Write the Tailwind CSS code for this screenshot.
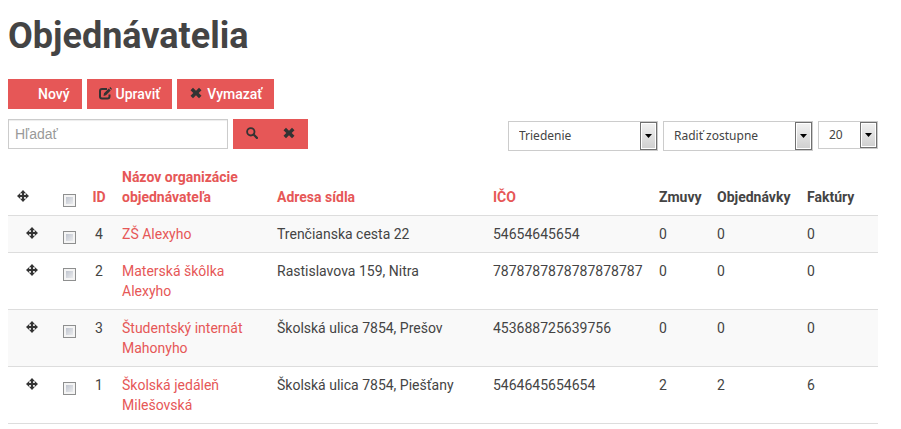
<!DOCTYPE html>
<html lang="sk">
<head>
    <meta charset="UTF-8">
    <meta name="viewport" content="width=device-width, initial-scale=1.0">
    <title>Objednávatelia</title>
    <script src="https://cdn.jsdelivr.net/npm/@tailwindcss/browser@4"></script>
</head>
<body class="bg-white pl-2 pr-[23px] font-[Roboto,sans-serif] text-sm leading-5 text-[#444]">
    <!-- icon shapes -->
    <svg class="hidden">
      <symbol id="icon-move" viewBox="0 0 12 12">
        <path d="M6 0 9 3.200H7.100v1.700h1.700V3L12 6 8.800 9V7.100H7.100v1.700H9L6 12 3 8.800h1.900V7.100H3.200V9L0 6l3.200-3v1.900h1.700V3.200H3z"/>
      </symbol>
      <symbol id="icon-x" viewBox="0 0 12 12">
        <path d="M3 .7 6 3.700 9 .7 11.500 3.200 8.700 6l2.800 2.800L9 11.300l-3-3-3 3L.5 8.800 3.300 6 .5 3.200z"/>
      </symbol>
      <symbol id="icon-search" viewBox="0 0 13 13">
        <circle cx="5.200" cy="5.200" r="4" fill="none" stroke="currentColor" stroke-width="2"/>
        <path d="m8.200 8.200 3.600 3.600" stroke="currentColor" stroke-width="2.400" stroke-linecap="round"/>
      </symbol>
      <symbol id="icon-edit" viewBox="0 0 13 13">
        <path d="M8 2H3a2 2 0 0 0-2 2v5.500a2 2 0 0 0 2 2h5.500a2 2 0 0 0 2-2V7.500" fill="none" stroke="currentColor" stroke-width="2"/>
        <path d="m4.500 9 .5-2.800L9.800 1.500l1.900 1.900L7 8.300zM10.400 .9l.8-.8 1.800 1.800-.8.8z"/>
      </symbol>
    </svg>

    <h1 class="pt-4 text-4xl leading-10 font-bold">Objednávatelia</h1>

    <div class="mt-[23px] flex gap-[5px] font-medium text-white">
      <button type="button" class="h-[30px] bg-[#e65757] pr-3 pl-[30px]">Nový</button>
      <button type="button" class="flex h-[30px] items-center gap-1 bg-[#e65757] px-3"><svg class="mb-0.5 size-[13px] fill-current text-[#333]"><use href="#icon-edit"/></svg>Upraviť</button>
      <button type="button" class="flex h-[30px] items-center gap-1 bg-[#e65757] px-3"><svg class="mx-px mb-0.5 size-3 fill-current text-[#333]"><use href="#icon-x"/></svg>Vymazať</button>
    </div>

    <form class="mt-2.5 flex items-start justify-between">
      <div class="flex gap-[5px]">
        <input type="text" name="search" aria-label="Hľadať" placeholder="Hľadať" class="h-[30px] w-[220px] border border-[#ccc] px-1.5 font-['Liberation_Sans',sans-serif] shadow-[inset_0_1px_1px_rgba(0,0,0,0.075)] placeholder:text-[#999]">
        <div class="flex">
          <button type="submit" aria-label="Hľadať" class="flex h-[30px] w-[38px] items-center justify-center bg-[#e65757] pb-0.5"><svg class="size-3 fill-current text-[#333]"><use href="#icon-search"/></svg></button>
          <button type="reset" aria-label="Zrušiť" class="flex h-[30px] w-[37px] items-center bg-[#e65757] px-3 pb-0.5"><svg class="size-3 fill-current text-[#333]"><use href="#icon-x"/></svg></button>
        </div>
      </div>
      <div class="flex items-start gap-[5px] pt-0.5 font-['Noto_Sans',sans-serif] text-xs">
        <div class="relative">
          <select aria-label="Triedenie" class="h-[30px] w-[150px] appearance-none border border-[#ccc] bg-white px-2.5"><option>Triedenie</option></select>
          <span class="pointer-events-none absolute inset-y-px right-px flex w-[17px] items-center justify-center border border-[#707070] bg-linear-to-b from-[#f2f2f2] to-[#cfcfcf] inset-ring inset-ring-white"><svg class="h-1 w-[7px] fill-black" viewBox="0 0 7 4"><path d="M0 0h7L3.500 4z"/></svg></span>
        </div>
        <div class="relative">
          <select aria-label="Smer triedenia" class="h-[30px] w-[150px] appearance-none border border-[#ccc] bg-white px-2.5"><option>Radiť zostupne</option></select>
          <span class="pointer-events-none absolute inset-y-px right-px flex w-[17px] items-center justify-center border border-[#707070] bg-linear-to-b from-[#f2f2f2] to-[#cfcfcf] inset-ring inset-ring-white"><svg class="h-1 w-[7px] fill-black" viewBox="0 0 7 4"><path d="M0 0h7L3.500 4z"/></svg></span>
        </div>
        <div class="relative">
          <select aria-label="Počet záznamov" class="h-7 w-[60px] appearance-none border border-[#ccc] bg-white px-2.5"><option>20</option></select>
          <span class="pointer-events-none absolute inset-y-px right-px flex w-[17px] items-center justify-center border border-[#707070] bg-linear-to-b from-[#f2f2f2] to-[#cfcfcf] inset-ring inset-ring-white"><svg class="h-1 w-[7px] fill-black" viewBox="0 0 7 4"><path d="M0 0h7L3.500 4z"/></svg></span>
        </div>
      </div>
    </form>

    <table class="mt-2 w-full table-fixed border-b border-[#ddd] text-left [&_a]:text-[#e65757] [&_td]:p-2 [&_td]:align-top [&_th]:p-2 [&_th]:align-bottom">
      <colgroup>
        <col class="w-[47px]"><col class="w-[29px]"><col class="w-[30px]"><col class="w-[155px]"><col><col class="w-[166px]"><col class="w-[58px]"><col class="w-[90px]"><col class="w-[79px]">
      </colgroup>
      <thead>
        <tr>
          <th><a href="#" aria-label="Poradie" class="flex h-5 items-center px-px pb-0.5"><svg class="size-3 fill-[#333]"><use href="#icon-move"/></svg></a></th>
          <th><input type="checkbox" aria-label="Vybrať všetko" class="block size-[13px] appearance-none border border-[#8e8f8f] bg-linear-to-br from-[#b4bac6] to-[#f6f6f6] shadow-[inset_0_0_0_2px_#f4f4f4]"></th>
          <th class="text-center"><a href="#">ID</a></th>
          <th><a href="#">Názov organizácie objednávateľa</a></th>
          <th><a href="#">Adresa sídla</a></th>
          <th><a href="#">IČO</a></th>
          <th>Zmuvy</th>
          <th>Objednávky</th>
          <th>Faktúry</th>
        </tr>
      </thead>
      <tbody id="rows"></tbody>
    </table>

    <script>
      const customers = [
        { id: 4, name: "ZŠ Alexyho", address: "Trenčianska cesta 22", ico: "54654645654", counts: [0, 0, 0] },
        { id: 2, name: "Materská škôlka Alexyho", address: "Rastislavova 159, Nitra", ico: "7878787878787878787", counts: [0, 0, 0] },
        { id: 3, name: "Študentský internát Mahonyho", address: "Školská ulica 7854, Prešov", ico: "453688725639756", counts: [0, 0, 0] },
        { id: 1, name: "Školská jedáleň Milešovská", address: "Školská ulica 7854, Piešťany", ico: "5464645654654", counts: [2, 2, 6] },
      ];

      document.getElementById("rows").innerHTML = customers.map((c) => `
        <tr class="border-t border-[#ddd] odd:bg-[#f9f9f9]">
          <td><svg class="mx-auto mt-[3px] size-3 fill-[#333]"><use href="#icon-move"/></svg></td>
          <td><input type="checkbox" aria-label="${c.name}" class="mt-[7px] block size-[13px] appearance-none border border-[#8e8f8f] bg-linear-to-br from-[#b4bac6] to-[#f6f6f6] shadow-[inset_0_0_0_2px_#f4f4f4]"></td>
          <td class="text-center">${c.id}</td>
          <td><a href="#">${c.name}</a></td>
          <td>${c.address}</td>
          <td>${c.ico}</td>
          ${c.counts.map((n) => `<td>${n}</td>`).join("")}
        </tr>`).join("");
    </script>
</body>
</html>
